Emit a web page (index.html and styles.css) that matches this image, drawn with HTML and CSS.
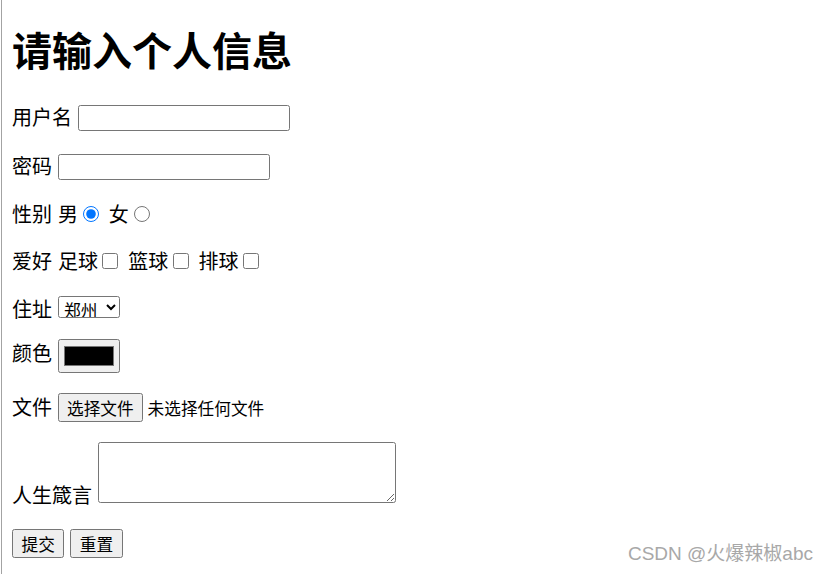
FILE: index.html
```html
<!DOCTYPE html>
<html lang="zh-CN">
<head>
<meta charset="utf-8">
<title>个人信息</title>
<link rel="stylesheet" href="styles.css">
</head>
<body>
<div class="page">
  <h1 class="title">请输入个人信息</h1>
  <form class="form">
    <p class="row row-first">用户名 <input class="text" type="text"></p>
    <p class="row">密码 <input class="text" type="password"></p>
    <p class="row">性别 男<input class="radio" type="radio" name="sex" checked> 女<input class="radio" type="radio" name="sex"></p>
    <p class="row">爱好 足球<input class="check" type="checkbox"> 篮球<input class="check" type="checkbox"> 排球<input class="check" type="checkbox"></p>
    <p class="row row-select">住址 <select class="select"><option>郑州</option><option>北京</option></select></p>
    <p class="row row-color">颜色 <input class="color" type="color" value="#000000"></p>
    <p class="row">文件 <span class="file"><button class="btn" type="button">选择文件</button><span class="file-note">未选择任何文件</span></span></p>
    <p class="row">人生箴言 <textarea class="area"></textarea></p>
    <p class="row"><button class="btn btn-action" type="submit">提交</button> <button class="btn btn-action" type="reset">重置</button></p>
  </form>
</div>
<div class="watermark">CSDN @火爆辣椒abc</div>
</body>
</html>
```

FILE: styles.css
```css
html, body {
  margin: 0;
  padding: 0;
  background: #ffffff;
}

.page {
  box-sizing: border-box;
  min-height: 574px;
  margin-left: 1px;
  border-left: 1px solid #a3a3a3;
  padding: 1px 10px 0 10px;
  font-family: "Microsoft YaHei", "Noto Sans CJK SC", sans-serif;
  font-size: 20px;
  line-height: 1.32;
  color: #000;
}

.title {
  font-size: 40px;
  font-weight: bold;
  margin: 22px 0 27px 0;
  line-height: 1.32;
}

.form {
  margin: 0;
}

.row {
  margin: 20px 0;
  line-height: 1.37;
  word-spacing: 1.5px;
}

.row-first {
  margin-bottom: 21px;
}

.row-select {
  margin-bottom: 17px;
}

.row-color {
  margin-top: 17px;
}

.text {
  box-sizing: border-box;
  width: 212px;
  height: 26px;
  margin: 0;
  padding: 1px 2.5px;
  border: 1px solid #767676;
  border-radius: 2.5px;
  font-family: inherit;
  font-size: 16.67px;
  background: #fff;
}

.radio {
  width: 16px;
  height: 16px;
  margin: 3.75px 3.75px 0 5px;
  accent-color: #0075ff;
}

.check {
  width: 16px;
  height: 16px;
  margin: 3.75px 3.75px 3.75px 4.5px;
}

.select {
  box-sizing: border-box;
  width: 62px;
  height: 22px;
  margin: 0;
  padding: 0 0 0 1px;
  border: 1px solid #767676;
  border-radius: 2.5px;
  font-family: inherit;
  font-size: 16.67px;
  background: #fff;
  color: #000;
}

.color {
  box-sizing: border-box;
  width: 62px;
  height: 34px;
  margin: 0;
  padding: 1.25px 2.5px;
  border: 1px solid #767676;
  border-radius: 2.5px;
  background: #efefef;
  vertical-align: middle;
}

.color::-webkit-color-swatch-wrapper {
  padding: 5px 2.5px;
}

.color::-webkit-color-swatch {
  border: 1.25px solid #777;
}

.file {
  font-size: 16.67px;
  word-spacing: 0;
}

.btn {
  box-sizing: border-box;
  height: 29px;
  margin: 0;
  padding: 1px 8px;
  border: 1px solid #767676;
  border-radius: 2.5px;
  background: #efefef;
  font-family: inherit;
  font-size: 16.67px;
  color: #000;
  word-spacing: 0;
}

.btn-action {
  padding: 1px 8.5px;
}

.file-note {
  margin-left: 5px;
}

.area {
  box-sizing: border-box;
  width: 298px;
  height: 61px;
  margin: 0;
  border: 1px solid #767676;
  border-radius: 2.5px;
  font-size: 16.67px;
}

.watermark {
  position: absolute;
  right: 14px;
  bottom: 9px;
  font-family: "Liberation Sans", "Noto Sans CJK SC", sans-serif;
  font-size: 19px;
  color: #a8a8a8;
  text-shadow: 0 0 1px #fff;
}
```
